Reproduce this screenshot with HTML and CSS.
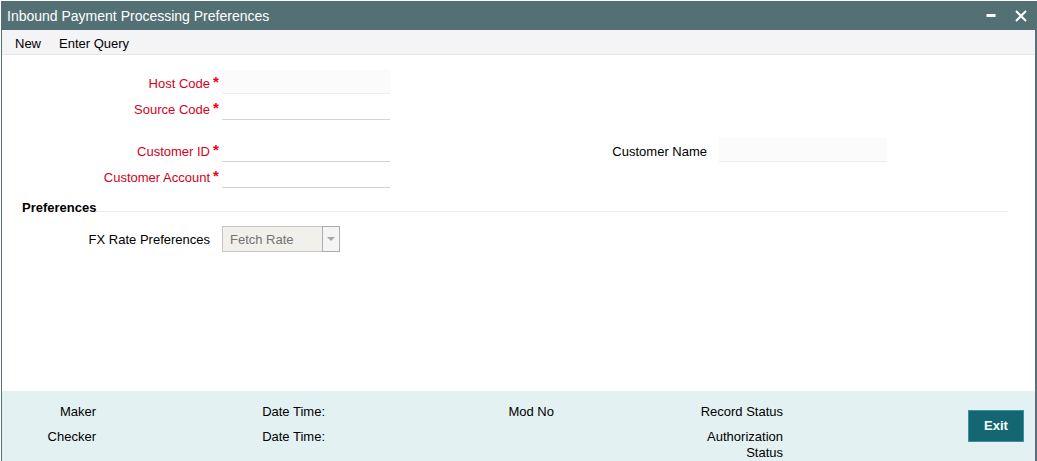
FILE: index.html
```html
<!DOCTYPE html>
<html lang="en">
<head>
<meta charset="utf-8">
<title>Inbound Payment Processing Preferences</title>
<link rel="stylesheet" href="styles.css">
</head>
<body>
<div class="window">
  <header class="titlebar">
    <h1 class="title">Inbound Payment Processing Preferences</h1>
    <button class="window-button" type="button" aria-label="Minimize">
      <svg width="12" height="12" viewBox="0 0 12 12"><path d="M1.5 5.5H10.5" stroke="#fff" stroke-width="3"/></svg>
    </button>
    <button class="window-button" type="button" aria-label="Close">
      <svg width="12" height="12" viewBox="0 0 12 12"><path d="M1 1L11 11M11 1L1 11" stroke="#fff" stroke-width="2"/></svg>
    </button>
  </header>
  <nav class="toolbar">
    <button class="tool" type="button">New</button>
    <button class="tool" type="button">Enter Query</button>
  </nav>
  <main class="form">
    <div class="group">
      <div class="field required">
        <label class="label" for="host">Host Code</label><span class="star">*</span>
        <input class="input" id="host" type="text" readonly>
      </div>
      <div class="field required">
        <label class="label" for="source">Source Code</label><span class="star">*</span>
        <input class="input" id="source" type="text">
      </div>
    </div>
    <div class="columns">
      <div class="group">
        <div class="field required">
          <label class="label" for="customer">Customer ID</label><span class="star">*</span>
          <input class="input" id="customer" type="text">
        </div>
        <div class="field required">
          <label class="label" for="account">Customer Account</label><span class="star">*</span>
          <input class="input" id="account" type="text">
        </div>
      </div>
      <div class="group">
        <div class="field">
          <label class="label" for="name">Customer Name</label><span class="star"></span>
          <input class="input" id="name" type="text" readonly>
        </div>
      </div>
    </div>
    <section class="preferences">
      <h2 class="heading">Preferences</h2>
      <div class="field">
        <label class="label" for="rate">FX Rate Preferences</label><span class="star"></span>
        <span class="select-box">
          <select class="select" id="rate" disabled><option>Fetch Rate</option></select>
          <span class="arrow"><svg width="8" height="4" viewBox="0 0 8 4"><path d="M0 0H8L4 4Z" fill="#a5a5a5"/></svg></span>
        </span>
      </div>
    </section>
  </main>
  <footer class="footer">
    <div class="audit">
      <span class="audit-label">Maker</span>
      <span class="audit-label">Date Time:</span>
      <span class="audit-label">Mod No</span>
      <span class="audit-label">Record Status</span>
      <span class="audit-label">Checker</span>
      <span class="audit-label">Date Time:</span>
      <span class="audit-label"></span>
      <span class="audit-label">Authorization Status</span>
    </div>
    <button class="exit" type="button">Exit</button>
  </footer>
</div>
</body>
</html>
```
FILE: styles.css
```css
* {
  box-sizing: border-box;
}

body {
  margin: 0;
  background: #fff;
  color: #000;
  font: 13px/16px "Liberation Sans", Arial, sans-serif;
}

button,
input,
select {
  font: inherit;
  border-radius: 0;
}

.window {
  display: flex;
  flex-direction: column;
  min-height: 100vh;
  padding: 1px 0 0 1px;
}

.titlebar {
  display: flex;
  align-items: center;
  gap: 18px;
  height: 29px;
  padding: 0 10px 0 6px;
  background: #537175;
  color: #fff;
}

.title {
  flex: 1;
  margin: 0;
  font-size: 14px;
  font-weight: normal;
}

.window-button {
  display: flex;
  padding: 0;
  border: 0;
  background: none;
}

.toolbar,
.form,
.footer {
  border-left: 1px solid #537175;
  border-right: 2px solid #5a6f7a;
}

.toolbar {
  display: flex;
  gap: 18px;
  height: 25px;
  padding: 0 13px;
  background: linear-gradient(#f4f4f7 24px, #e6e6e8 24px);
}

.tool {
  padding: 3px 0 0;
  border: 0;
  background: none;
  color: #000;
}

.form {
  display: flex;
  flex: 1;
  flex-direction: column;
  gap: 16px;
  padding: 15px 27px 0 20px;
}

.group {
  display: flex;
  flex-direction: column;
}

.columns {
  display: grid;
  grid-template-columns: 1fr 1fr;
  gap: 8px;
}

.field {
  display: flex;
  align-items: flex-start;
  height: 26px;
}

.label {
  width: 188px;
  padding-top: 6px;
  text-align: right;
}

.required {
  color: #d0021b;
}

.star {
  width: 12px;
  padding: 4px 0 0 3px;
  color: #f00014;
  font-size: 15px;
  font-weight: bold;
}

.input {
  width: 168px;
  height: 24px;
  padding: 0 6px;
  border: 0;
  border-bottom: 1px solid #d3d3d3;
  background: #fff;
}

.input:read-only {
  border-color: #ededed;
  background: #fbfbfb;
}

.preferences {
  display: flex;
  flex-direction: column;
  gap: 10px;
  margin-top: -6px;
}

.heading {
  display: flex;
  align-items: center;
  margin: 0;
  font-size: 13px;
}

.heading::after {
  flex: 1;
  height: 1px;
  margin-top: 7px;
  background: #ebebeb;
  content: "";
}

.select-box {
  display: grid;
  grid-template-columns: 1fr 18px;
  width: 118px;
  height: 26px;
}

.select {
  grid-area: 1 / 1 / 2 / 3;
  padding: 1px 7px 0;
  border: 1px solid #c6c6c3;
  background: #f1f0eb;
  color: #737373;
  opacity: 1;
  appearance: none;
}

.arrow {
  display: flex;
  grid-area: 1 / 2;
  align-items: center;
  justify-content: center;
  border: 1px solid #acacac;
  background: #f4f4f4;
  pointer-events: none;
}

.footer {
  display: flex;
  align-items: flex-start;
  justify-content: space-between;
  min-height: 70px;
  padding: 13px 11px 0 0;
  background: #e4f1f3;
}

.audit {
  display: grid;
  flex: 0 1 916px;
  grid-template-columns: repeat(4, 1fr);
  row-gap: 9px;
}

.audit-label {
  width: 94px;
  text-align: right;
}

.exit {
  width: 56px;
  height: 32px;
  margin-top: 6px;
  padding: 0;
  border: 1px solid #3e9299;
  background: #146772;
  color: #fff;
  font-weight: bold;
}
```
